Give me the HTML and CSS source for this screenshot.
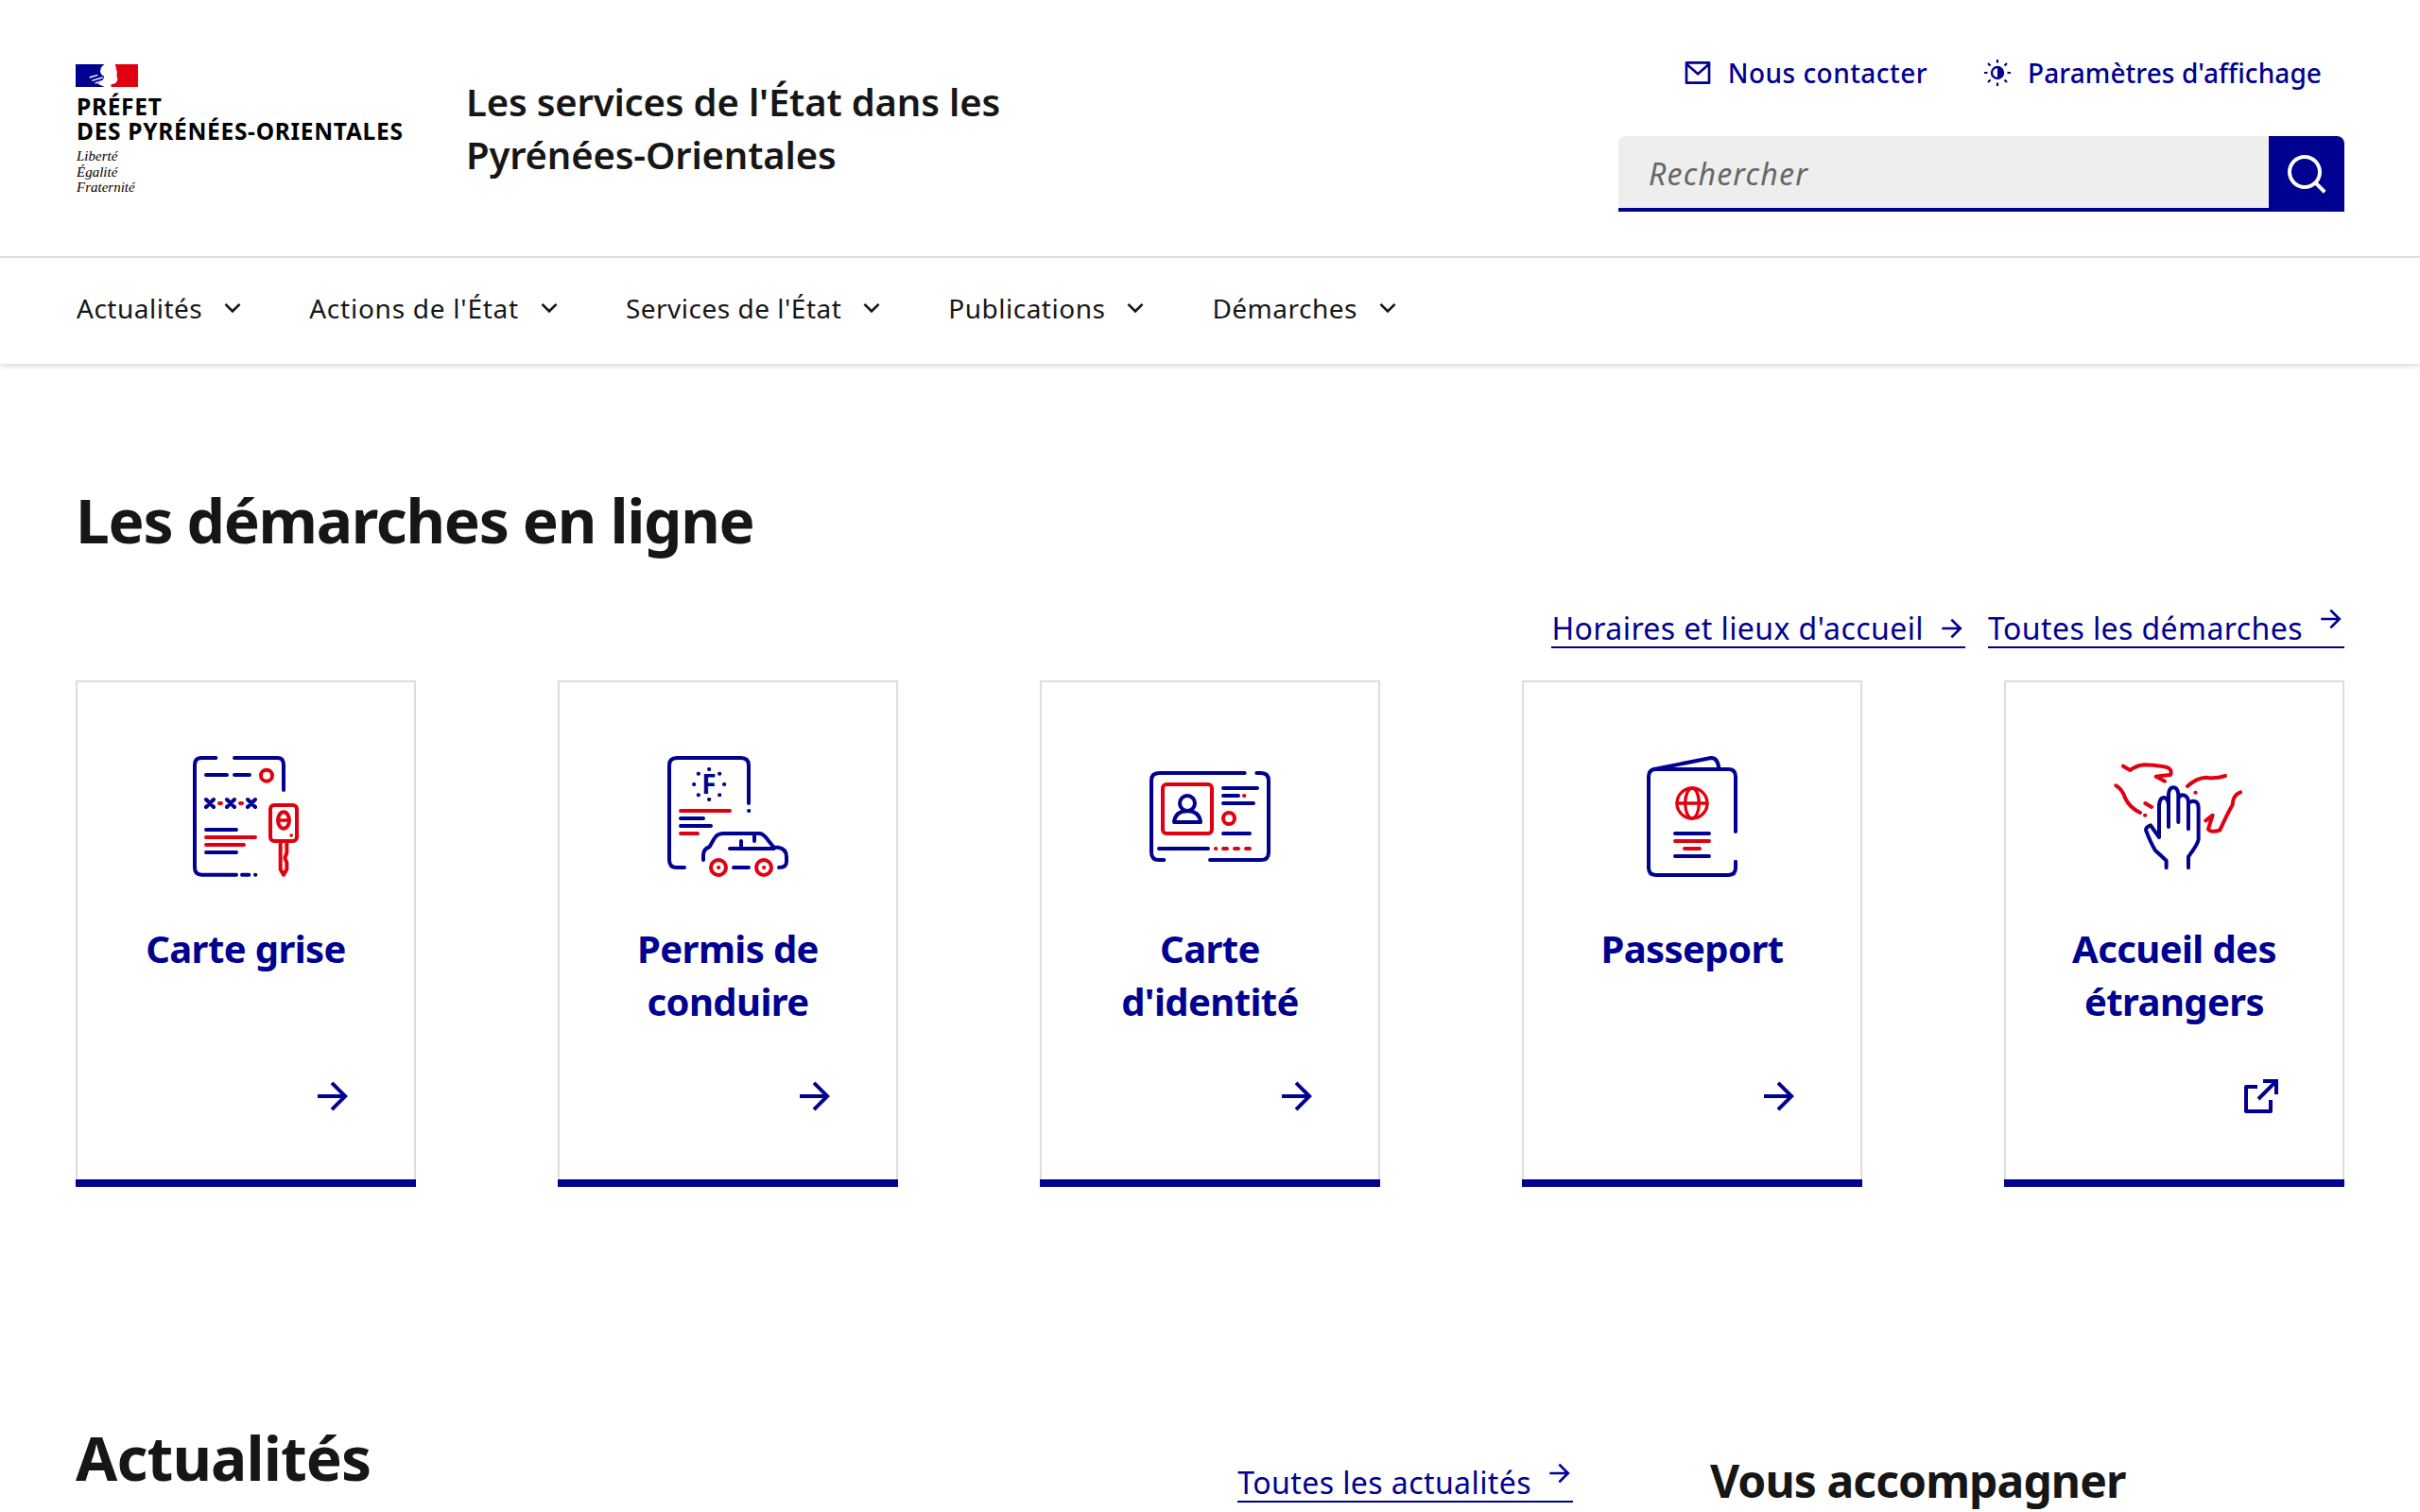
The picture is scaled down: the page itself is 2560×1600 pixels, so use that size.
FILE: index.html
```html
<!DOCTYPE html>
<html lang="fr">
<head>
<meta charset="utf-8">
<title>Les services de l'État dans les Pyrénées-Orientales</title>
<link rel="stylesheet" href="styles.css">
</head>
<body>
<header class="site-header">
  <div class="brand-row">
    <a class="logo" href="#">
      <svg class="flag" viewBox="60 54 198 72" aria-hidden="true">
        <rect x="60" y="54" width="92" height="72" fill="#000091"/>
        <path d="M185 54H258V126H172V118Q190 116 193 102Q187 90 191 80Q188 66 185 54Z" fill="#e1000f"/>
        <path d="M152 54Q138 62 138 78Q140 88 150 92Q150 106 130 116L152 126H172V118Q190 116 193 102Q187 90 191 80Q188 66 185 54Z" fill="#fff"/>
        <path d="M104 96L130 88M112 106L146 96M122 114L148 106" stroke="#fff" stroke-width="4" fill="none"/>
      </svg>
      <span class="prefet">PRÉFET<br>DES PYRÉNÉES-ORIENTALES</span>
      <span class="devise">Liberté<br>Égalité<br>Fraternité</span>
    </a>
    <p class="site-title">Les services de l'État dans les<br>Pyrénées-Orientales</p>
    <div class="tools">
      <div class="tool-links">
        <a class="tool-link tool-contact" href="#">
          <svg class="icon32" viewBox="0 0 24 24" aria-hidden="true"><path class="fill" d="M3 3h18a1 1 0 0 1 1 1v16a1 1 0 0 1-1 1H3a1 1 0 0 1-1-1V4a1 1 0 0 1 1-1zm17 4.238l-7.928 7.1L4 7.216V19h16V7.238zM4.511 5l7.55 6.662L19.502 5H4.511z"/></svg>
          Nous contacter
        </a>
        <a class="tool-link" href="#">
          <svg class="icon32" viewBox="0 0 32 32" aria-hidden="true">
            <circle class="stroke" cx="16" cy="16" r="6" stroke-width="2.4"/>
            <path class="fill" d="M16 10a6 6 0 0 1 0 12z"/>
            <path class="stroke" stroke-width="2.2" d="M16 2v3.500M16 26.500V30M2 16h3.500M26.500 16H30M6 6l2.500 2.500M23.500 23.500L26 26M6 26l2.500-2.500M23.500 8.500L26 6"/>
          </svg>
          Paramètres d'affichage
        </a>
      </div>
      <form class="search">
        <input class="search-input" type="text" placeholder="Rechercher">
        <button class="search-btn" type="button" aria-label="Rechercher">
          <svg class="icon48" viewBox="0 0 24 24" aria-hidden="true"><path fill="#fff" d="M18.031 16.617l4.283 4.282-1.415 1.415-4.282-4.283A8.96 8.96 0 0 1 11 20c-4.968 0-9-4.032-9-9s4.032-9 9-9 9 4.032 9 9a8.96 8.96 0 0 1-1.969 5.617zm-2.006-.742A6.977 6.977 0 0 0 18 11c0-3.868-3.133-7-7-7-3.868 0-7 3.132-7 7 0 3.867 3.132 7 7 7a6.977 6.977 0 0 0 4.875-1.975l.15-.15z"/></svg>
        </button>
      </form>
    </div>
  </div>
  <nav class="main-nav">
    <a class="nav-item" href="#">Actualités<svg class="icon32 chev" viewBox="0 0 24 24" aria-hidden="true"><path d="M12 13.172l4.95-4.95 1.414 1.414L12 16 5.636 9.636 7.05 8.222z"/></svg></a>
    <a class="nav-item nav-wide" href="#">Actions de l'État<svg class="icon32 chev" viewBox="0 0 24 24" aria-hidden="true"><path d="M12 13.172l4.95-4.95 1.414 1.414L12 16 5.636 9.636 7.05 8.222z"/></svg></a>
    <a class="nav-item" href="#">Services de l'État<svg class="icon32 chev" viewBox="0 0 24 24" aria-hidden="true"><path d="M12 13.172l4.95-4.95 1.414 1.414L12 16 5.636 9.636 7.05 8.222z"/></svg></a>
    <a class="nav-item" href="#">Publications<svg class="icon32 chev" viewBox="0 0 24 24" aria-hidden="true"><path d="M12 13.172l4.95-4.95 1.414 1.414L12 16 5.636 9.636 7.05 8.222z"/></svg></a>
    <a class="nav-item" href="#">Démarches<svg class="icon32 chev" viewBox="0 0 24 24" aria-hidden="true"><path d="M12 13.172l4.95-4.95 1.414 1.414L12 16 5.636 9.636 7.05 8.222z"/></svg></a>
  </nav>
</header>

<main class="content">
  <h2 class="section-title">Les démarches en ligne</h2>
  <div class="more-links">
    <a class="text-link" href="#">Horaires et lieux d'accueil<svg class="link-arrow" viewBox="0 0 24 24" aria-hidden="true"><path d="M16.172 11l-5.364-5.364 1.414-1.414L20 12l-7.778 7.778-1.414-1.414L16.172 13H4v-2z"/></svg></a>
    <a class="text-link" href="#">Toutes les démarches<svg class="link-arrow raised" viewBox="0 0 24 24" aria-hidden="true"><path d="M16.172 11l-5.364-5.364 1.414-1.414L20 12l-7.778 7.778-1.414-1.414L16.172 13H4v-2z"/></svg></a>
  </div>

  <div class="tiles">
    <a class="tile" href="#">
      <svg class="picto" viewBox="0 12 480 480" aria-hidden="true">
        <g class="pb">
          <path d="M145 66H100Q78 66 78 88V415Q78 437 100 437H210M204 66H340Q360 66 360 88V168M114 120H180M204 120H252M114 294H210M114 366H210M228 437H250M270 437H271"/>
          <path d="M114 198L138 222M138 198L114 222M180 198L204 222M204 198L180 222M246 198L270 222M270 198L246 222"/>
        </g>
        <g class="pr">
          <circle cx="306" cy="122" r="18"/>
          <path d="M156 210H162M222 210H228M114 318H270M114 342H234"/>
          <rect x="318" y="216" width="84" height="114" rx="12"/>
          <ellipse cx="360" cy="264" rx="18" ry="26" stroke-width="12"/>
          <path stroke-width="10" d="M346 264H374M384 312H385"/>
          <path stroke-width="12" d="M350 330V420L360 437L370 420V398L364 384L370 368V330"/>
        </g>
      </svg>
      <h3 class="tile-title">Carte grise</h3>
      <svg class="tile-icon" viewBox="0 0 24 24" aria-hidden="true"><path d="M16.172 11l-5.364-5.364 1.414-1.414L20 12l-7.778 7.778-1.414-1.414L16.172 13H4v-2z"/></svg>
    </a>
    <a class="tile" href="#">
      <svg class="picto" viewBox="30 12 480 480" aria-hidden="true">
        <g class="pb">
          <path d="M132 414H108Q84 414 84 390V90Q84 66 108 66H312Q336 66 336 90V210M336 234H337M120 258H192M120 282H216"/>
          <path d="M210 102H211M243 116H244M258 150H259M243 184H244M210 198H211M176 184H177M162 150H163M176 116H177"/>
          <text class="picto-letter" x="210" y="180" text-anchor="middle">F</text>
          <path d="M192 390V375Q192 355 212 348L225 325Q235 306 255 306H370Q380 306 390 318L416 350H430Q456 355 456 380V395Q456 414 432 414M276 354H416M312 330V354M354 312V330M288 414H336"/>
        </g>
        <g class="pr">
          <path d="M120 234H276M120 306H174"/>
          <circle cx="240" cy="414" r="24"/>
          <circle cx="384" cy="414" r="24"/>
          <path d="M240 414H241M384 414H385"/>
        </g>
      </svg>
      <h3 class="tile-title">Permis de conduire</h3>
      <svg class="tile-icon" viewBox="0 0 24 24" aria-hidden="true"><path d="M16.172 11l-5.364-5.364 1.414-1.414L20 12l-7.778 7.778-1.414-1.414L16.172 13H4v-2z"/></svg>
    </a>
    <a class="tile" href="#">
      <svg class="picto" viewBox="30 -18 480 480" aria-hidden="true">
        <g class="pb">
          <path d="M380 84H108Q84 84 84 108V336Q84 360 108 360H124M418 84H432Q456 84 456 108V336Q456 360 432 360H270"/>
          <circle cx="198" cy="180" r="24"/>
          <path d="M156 240Q160 205 198 205Q236 205 240 240Z"/>
          <path d="M312 132H420M312 156H360M312 180H408M312 276H396M108 324H264"/>
        </g>
        <g class="pr">
          <rect x="120" y="120" width="156" height="156" rx="12"/>
          <circle cx="330" cy="228" r="18"/>
          <path d="M378 156H379M288 324H289M312 324H324M348 324H360M384 324H396"/>
        </g>
      </svg>
      <h3 class="tile-title">Carte d'identité</h3>
      <svg class="tile-icon" viewBox="0 0 24 24" aria-hidden="true"><path d="M16.172 11l-5.364-5.364 1.414-1.414L20 12l-7.778 7.778-1.414-1.414L16.172 13H4v-2z"/></svg>
    </a>
    <a class="tile" href="#">
      <svg class="picto" viewBox="30 12 480 480" aria-hidden="true">
        <g class="pb">
          <path d="M150 102L330 66Q352 66 355 100"/>
          <path d="M408 300V125Q408 102 385 102H155Q132 102 132 125V415Q132 438 155 438H385Q408 438 408 415V395M216 306H324M216 378H324"/>
        </g>
        <g class="pr">
          <path d="M216 330H324M246 354H294"/>
          <g stroke-width="10">
            <circle cx="270" cy="210" r="48"/>
            <ellipse cx="270" cy="210" rx="22" ry="48"/>
            <path d="M222 210H318"/>
          </g>
        </g>
      </svg>
      <h3 class="tile-title">Passeport</h3>
      <svg class="tile-icon" viewBox="0 0 24 24" aria-hidden="true"><path d="M16.172 11l-5.364-5.364 1.414-1.414L20 12l-7.778 7.778-1.414-1.414L16.172 13H4v-2z"/></svg>
    </a>
    <a class="tile" href="#">
      <svg class="picto" viewBox="30 -18 480 480" aria-hidden="true">
        <g class="pb">
          <path d="M222 288V185Q225 162 238 162Q250 165 252 185V255M252 185V150Q255 130 267 130Q280 130 283 150V240M283 165Q290 150 302 155Q314 160 315 175V262M315 180Q325 170 338 175Q347 180 347 195V295Q345 310 315 350V385M222 288L195 250Q180 255 180 265Q195 305 210 330L245 362V385"/>
        </g>
        <g class="pr">
          <path d="M108 62L130 75Q150 60 175 58Q210 58 245 65Q265 72 258 90L212 95L240 110M85 124Q105 135 115 165Q130 195 162 210M177 218H178M178 180L198 192M337 146H338M312 126Q340 100 370 98Q400 104 432 93M480 145Q455 155 455 185Q440 210 415 265Q385 275 378 262L392 218L370 235"/>
        </g>
      </svg>
      <h3 class="tile-title">Accueil des étrangers</h3>
      <svg class="tile-icon" viewBox="0 0 24 24" aria-hidden="true"><path d="M10 6v2H5v11h11v-5h2v6a1 1 0 0 1-1 1H4a1 1 0 0 1-1-1V7a1 1 0 0 1 1-1h6zm11-3v8h-2V6.413l-7.793 7.794-1.414-1.414L17.585 5H13V3h8z"/></svg>
    </a>
  </div>

  <div class="lower">
    <div class="news-head">
      <h2 class="section-title flat">Actualités</h2>
      <a class="text-link news-link" href="#">Toutes les actualités<svg class="link-arrow raised" viewBox="0 0 24 24" aria-hidden="true"><path d="M16.172 11l-5.364-5.364 1.414-1.414L20 12l-7.778 7.778-1.414-1.414L16.172 13H4v-2z"/></svg></a>
    </div>
    <h2 class="side-title">Vous accompagner</h2>
  </div>
</main>
</body>
</html>
```
FILE: styles.css
```css
html, body {
  margin: 0;
  height: 1600px;
  overflow: hidden;
  background: #fff;
}
body {
  font-family: "Noto Sans", sans-serif;
  color: #161616;
}
a {
  color: inherit;
  text-decoration: none;
}
.site-header {
  position: relative;
  background: #fff;
  box-shadow: 0 2px 6px rgba(0, 0, 18, 0.16);
}
.brand-row {
  display: flex;
  align-items: center;
  height: 271px;
  padding: 0 80px;
  border-bottom: 2px solid #ddd;
}
.logo {
  display: flex;
  flex-direction: column;
  align-self: flex-start;
  margin-top: 68px;
  width: 413px;
  color: #000;
}
.flag {
  width: 66px;
  height: 24px;
  margin-bottom: 8px;
}
.prefet {
  padding-left: 1px;
  font-size: 24.5px;
  line-height: 26px;
  font-weight: 700;
  letter-spacing: 0.7px;
}
.devise {
  margin-top: 5px;
  padding-left: 1px;
  font-family: "Liberation Serif", serif;
  font-style: italic;
  font-size: 15px;
  line-height: 16.5px;
}
.site-title {
  margin: 0;
  font-size: 40px;
  line-height: 56px;
  font-weight: 600;
  letter-spacing: -0.16px;
}
.tools {
  margin-left: auto;
  align-self: flex-start;
  margin-top: 64px;
  width: 768px;
}
.tool-links {
  display: flex;
  justify-content: flex-end;
  gap: 58px;
  padding-right: 24px;
  height: 32px;
  margin-top: -3px;
  margin-bottom: 51px;
}
.tool-link {
  display: flex;
  align-items: center;
  gap: 16px;
  font-size: 28px;
  line-height: 32px;
  font-weight: 500;
  letter-spacing: 0.08px;
  color: #000091;
}
.tool-contact {
  letter-spacing: 0.46px;
}
.icon32 {
  width: 32px;
  height: 32px;
  flex: none;
}
.icon48 {
  width: 48px;
  height: 48px;
  display: block;
}
.fill {
  fill: #000091;
}
.stroke {
  fill: none;
  stroke: #000091;
}
.search {
  display: flex;
  height: 80px;
}
.search-input {
  flex: 1;
  min-width: 0;
  border: 0;
  border-bottom: 4px solid #000091;
  border-radius: 8px 0 0 0;
  background: #eee;
  padding: 2px 32px 0;
  font: italic 400 32px "Noto Sans", sans-serif;
  letter-spacing: 1.2px;
  color: #161616;
  box-sizing: border-box;
  outline: none;
}
.search-input::placeholder {
  color: #666;
  opacity: 1;
}
.search-btn {
  width: 80px;
  height: 80px;
  border: 0;
  padding: 0;
  background: #000091;
  border-radius: 0 8px 0 0;
  display: flex;
  align-items: center;
  justify-content: center;
}
.main-nav {
  display: flex;
  height: 112px;
  box-sizing: border-box;
  padding: 0 80px 6px 81px;
  gap: 65px;
}
.nav-item {
  display: flex;
  align-items: center;
  gap: 16px;
  font-size: 28px;
  font-weight: 400;
  letter-spacing: 0.5px;
  color: #161616;
}
.nav-wide {
  letter-spacing: 0.75px;
}
.chev {
  fill: #161616;
}
.content {
  padding: 130px 80px 0;
}
.section-title {
  margin: 0;
  font-size: 64px;
  line-height: 72px;
  font-weight: 700;
  letter-spacing: -1.3px;
  color: #161616;
}
.section-title.flat {
  letter-spacing: -0.9px;
}
.more-links {
  display: flex;
  justify-content: flex-end;
  gap: 24px;
  margin: 53px 0 34px;
}
.text-link {
  display: flex;
  align-items: center;
  height: 38px;
  padding-top: 6px;
  font-size: 32px;
  line-height: 38px;
  letter-spacing: 0.42px;
  color: #000091;
  border-bottom: 2px solid #000091;
}
.link-arrow {
  width: 32px;
  height: 32px;
  margin-left: 14px;
  margin-right: -2px;
  fill: #000091;
}
.link-arrow.raised {
  margin-top: -20px;
}
.tiles {
  display: flex;
  justify-content: space-between;
}
.tile {
  display: flex;
  flex-direction: column;
  width: 360px;
  height: 536px;
  box-sizing: border-box;
  padding: 64px 64px 72px;
  box-shadow: inset 0 -8px 0 #000091, inset 0 0 0 2px #ddd;
  text-align: center;
}
.picto {
  width: 160px;
  height: 160px;
  flex: none;
  align-self: center;
  margin-bottom: 32px;
}
.pb, .pr {
  fill: none;
  stroke-width: 12;
  stroke-linecap: round;
  stroke-linejoin: round;
}
.pb {
  stroke: #000091;
}
.pr {
  stroke: #e1000f;
}
.picto-letter {
  font-family: "Noto Sans", sans-serif;
  font-size: 84px;
  font-weight: 700;
  fill: #000091;
  stroke: none;
}
.tile-title {
  margin: 0;
  height: 112px;
  font-size: 40px;
  line-height: 56px;
  font-weight: 700;
  letter-spacing: -0.6px;
  color: #000091;
}
.tile-icon {
  width: 48px;
  height: 48px;
  flex: none;
  align-self: flex-end;
  margin-top: auto;
  fill: #000091;
}
.lower {
  display: grid;
  grid-template-columns: 1584px 1fr;
  column-gap: 145px;
  margin-top: 251px;
}
.news-head {
  display: flex;
  justify-content: space-between;
  align-items: flex-start;
}
.news-link {
  margin-top: 37px;
}
.side-title {
  margin: 32px 0 0;
  font-size: 48px;
  line-height: 56px;
  font-weight: 700;
  letter-spacing: -0.9px;
  color: #161616;
}
```
